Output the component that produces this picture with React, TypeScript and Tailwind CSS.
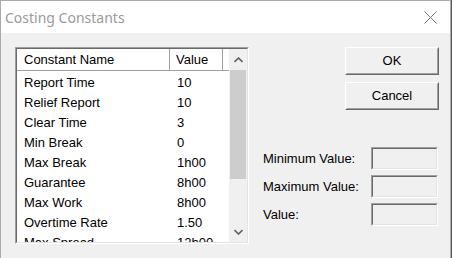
import React from 'react';

const ROWS: [string, string][] = [
  ['Report Time', '10'],
  ['Relief Report', '10'],
  ['Clear Time', '3'],
  ['Min Break', '0'],
  ['Max Break', '1h00'],
  ['Guarantee', '8h00'],
  ['Max Work', '8h00'],
  ['Overtime Rate', '1.50'],
  ['Max Spread', '12h00'],
];

const FIELDS = ['Minimum Value:', 'Maximum Value:', 'Value:'];

const Button: React.FC<{ label: string }> = ({ label }) => (
  <div className="w-[94px] h-[28px] border border-t-white border-l-white border-r-[#696969] border-b-[#696969]">
    <div className="h-full border border-t-[#f0f0f0] border-l-[#f0f0f0] border-r-[#a0a0a0] border-b-[#a0a0a0] bg-[#f0f0f0] flex items-center justify-center">
      {label}
    </div>
  </div>
);

const Chevron: React.FC<{ up?: boolean }> = ({ up }) => (
  <svg width="9" height="6" viewBox="0 0 9 6">
    <path
      d={up ? 'M0.5 5 L4.5 1 L8.5 5' : 'M0.5 1 L4.5 5 L8.5 1'}
      fill="none"
      stroke="#606060"
      strokeWidth="1.6"
    />
  </svg>
);

export default function App() {
  return (
    <div className="w-[452px] h-[258px] overflow-hidden bg-[#5a5a5a]">
      <div className="w-[451px] h-full border-l border-t border-r border-[#aaaaaa] bg-[#f0f0f0] flex flex-col">
        <div className="h-[32px] shrink-0 bg-white flex items-center pl-[4px] pr-[13px]">
          <span className="font-['Noto_Sans',sans-serif] text-[14px] text-[#9a9a9a]">Costing Constants</span>
          <svg className="ml-auto" width="13" height="13" viewBox="0 0 13 13">
            <path d="M0.5 0.5 L12.5 12.5 M12.5 0.5 L0.5 12.5" stroke="#777777" strokeWidth="1" />
          </svg>
        </div>

        <div className="flex pl-[14px] pt-[14px] pr-[11px] font-['Liberation_Sans',Arial,sans-serif] text-[13px] text-black">
          {/* list view */}
          <div className="w-[234px] h-[197px] shrink-0 border border-t-[#a0a0a0] border-l-[#a0a0a0] border-r-white border-b-white">
            <div className="h-full flex border border-t-[#696969] border-l-[#696969] border-r-[#e3e3e3] border-b-[#e3e3e3] bg-white">
              <div className="flex-1 flex flex-col overflow-hidden">
                <div className="h-[22px] shrink-0 flex bg-white">
                  <div className="w-[153px] pl-[7px] flex items-center border-r border-b border-r-[#a0a0a0] border-b-[#a0a0a0]">
                    Constant Name
                  </div>
                  <div className="w-[53px] pl-[6px] flex items-center border-r border-b border-r-[#a0a0a0] border-b-[#a0a0a0]">
                    Value
                  </div>
                  <div className="flex-1 border-b border-b-[#a0a0a0]" />
                </div>
                <div className="pt-[2px]">
                  {ROWS.map(([name, value]) => (
                    <div key={name} className="h-[20px] flex items-center">
                      <span className="w-[153px] pl-[7px] whitespace-nowrap">{name}</span>
                      <span className="pl-[7px]">{value}</span>
                    </div>
                  ))}
                </div>
              </div>
              <div className="w-[18px] shrink-0 bg-[#f0f0f0] flex flex-col">
                <div className="h-[21px] flex items-center justify-center">
                  <Chevron up />
                </div>
                <div className="flex-1 flex flex-col">
                  <div className="h-[109px] mx-[1px] bg-[#cdcdcd]" />
                </div>
                <div className="h-[21px] flex items-center justify-center">
                  <Chevron />
                </div>
              </div>
            </div>
          </div>

          {/* right side */}
          <div className="flex-1 flex flex-col pl-[14px]">
            <div className="flex flex-col items-end gap-[7px]">
              <Button label="OK" />
              <Button label="Cancel" />
            </div>
            <div className="mt-[37px] flex flex-col gap-[5px] pr-[1px]">
              {FIELDS.map(f => (
                <div key={f} className="flex items-center">
                  <span className="w-[108px] whitespace-nowrap">{f}</span>
                  <div className="w-[67px] h-[23px] border border-t-[#a0a0a0] border-l-[#a0a0a0] border-r-white border-b-white">
                    <div className="h-full border border-t-[#696969] border-l-[#696969] border-r-[#e3e3e3] border-b-[#e3e3e3] bg-[#f0f0f0]" />
                  </div>
                </div>
              ))}
            </div>
          </div>
        </div>
      </div>
    </div>
  );
}
